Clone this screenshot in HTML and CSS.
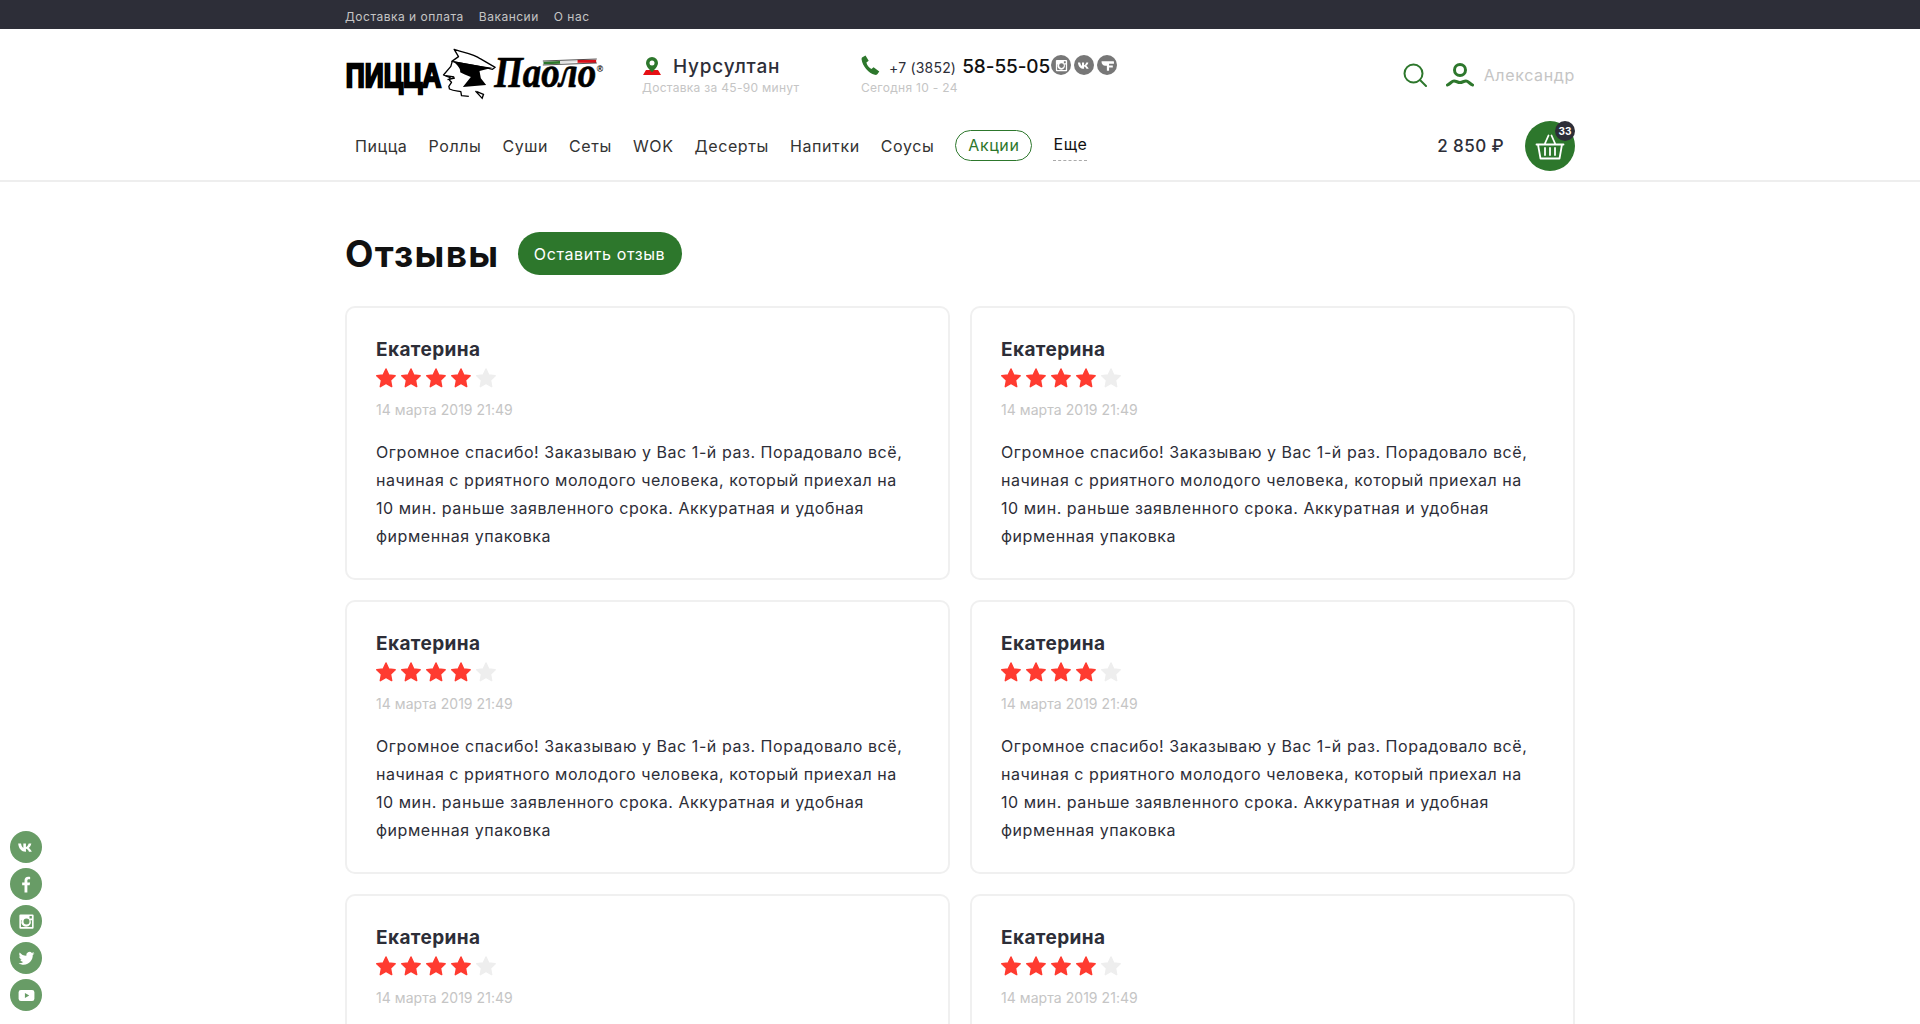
FILE: index.html
```html
<!DOCTYPE html>
<html lang="ru">
<head>
<meta charset="utf-8">
<title>Отзывы</title>
<link rel="stylesheet" href="styles.css">
</head>
<body>
<svg class="defs" width="0" height="0" aria-hidden="true">
  <symbol id="star" viewBox="0 0 24 24"><path d="M12 2.2l3 6.5 7 .9-5.1 4.8 1.3 7-6.200-3.500-6.200 3.500 1.300-7L1.900 9.600l7-.9z" fill="currentColor" stroke="currentColor" stroke-width="1.600" stroke-linejoin="round"/></symbol>
  <symbol id="vk" viewBox="0 0 24 24"><path d="M1.500 7h3.600c.5 3 1.700 5 2.900 5.500V7h3.300v4.500c1.300-.3 2.700-2 3.500-4.500h3.300c-.5 2.700-2 4.500-3.300 5.500 1.400.8 3 2.400 3.900 4.800h-3.600c-.7-2-2.100-3.300-3.800-3.600v3.600h-.7C6.100 17.300 2 13.700 1.500 7z" fill="currentColor"/></symbol>
  <symbol id="fb" viewBox="0 0 24 24"><path d="M9.500 22v-9H6.500V9.500h3V7c0-3 1.700-4.800 4.600-4.800 1.300 0 2.200.1 2.500.2v3.100h-1.800c-1.400 0-1.700.7-1.700 1.700v2.300h3.400l-.5 3.500h-2.900v9z" fill="currentColor"/></symbol>
  <symbol id="ig" viewBox="0 0 24 24"><path fill-rule="evenodd" d="M4.500 3h15A1.500 1.500 0 0 1 21 4.500v15a1.500 1.500 0 0 1-1.500 1.500h-15A1.500 1.500 0 0 1 3 19.500v-15A1.500 1.500 0 0 1 4.500 3zM15.800 5.200v3h3v-3zM5 10.500v8a.6.6 0 0 0 .6.6h12.800a.6.6 0 0 0 .6-.6v-8h-1.900a6 6 0 1 1-11.200 0zM12 8.300a3.800 3.800 0 1 0 0 7.600 3.800 3.800 0 0 0 0-7.600z" fill="currentColor"/></symbol>
  <symbol id="tw" viewBox="0 0 24 24"><path d="M22 5.500c-.7.300-1.500.6-2.400.7.900-.5 1.500-1.300 1.800-2.300-.8.500-1.700.8-2.600 1a4.100 4.100 0 0 0-7 3.700C8.400 8.400 5.400 6.800 3.400 4.300c-1.100 1.900-.5 4.300 1.300 5.500-.7 0-1.300-.2-1.900-.5 0 2 1.400 3.700 3.300 4.100-.6.200-1.200.2-1.900.1.500 1.600 2 2.800 3.800 2.800A8.300 8.300 0 0 1 2 18c1.900 1.200 4 1.900 6.300 1.900 7.600 0 11.900-6.400 11.600-12.200.9-.6 1.600-1.300 2.100-2.200z" fill="currentColor"/></symbol>
  <symbol id="yt" viewBox="0 0 24 24"><path fill-rule="evenodd" d="M5 5h14a3 3 0 0 1 3 3v8a3 3 0 0 1-3 3H5a3 3 0 0 1-3-3V8a3 3 0 0 1 3-3zm5 3.800v6.400l5.500-3.200z" fill="currentColor"/></symbol>
  <symbol id="tf" viewBox="0 0 24 24"><path d="M2.500 5h19c.5 0 .8.300.8.800V9H14.500v3h6v3h-6v5.500H11v-8H8.500a6 6 0 0 1-6-6.500z" fill="currentColor"/></symbol>
</svg>

<div class="topbar">
  <div class="container topbar-in">
    <a>Доставка и оплата</a><a>Вакансии</a><a>О нас</a>
  </div>
</div>

<header class="header">
  <div class="container header-top">
    <svg class="logo" viewBox="45 145 782 159" width="261" height="53" role="img" aria-label="Пицца Паоло">
      <text x="47" y="263" class="logo-a" textLength="286" lengthAdjust="spacingAndGlyphs">ПИЦЦА</text>
      <path d="M372 149c22 8 60 14 78 28l45 26-8 6c-36-8-84-16-122-24l20-14z" fill="#fff" stroke="#000" stroke-width="4" stroke-linejoin="round"/>
      <path d="M366 186l-4 14-22 26 20 8-2 8 6 6-8 12 2 8c12 6 26 6 34 8l2 12 22 2" fill="#fff" stroke="#000" stroke-width="4" stroke-linejoin="round"/>
      <path d="M368 184l78 14 40 6-38 10 4 22 16 20-70 6 24-30-20-8-12-6c2-10-6-20-22-34z" fill="#000"/>
      <path d="M346 228l26 4M352 240l22-5M436 274l20 22 4-12-20-8" fill="none" stroke="#000" stroke-width="4"/>
      <text x="492" y="263" class="logo-b" textLength="306" lengthAdjust="spacingAndGlyphs">Паоло</text>
      <path d="M640 190l50-2" stroke="#2d772c" stroke-width="8"/>
      <path d="M690 188l50-3" stroke="#e2e2e2" stroke-width="6"/>
      <path d="M742 185h56" stroke="#d8111b" stroke-width="9"/>
      <path d="M638 184l162-6M638 196l162-6" stroke="#000" stroke-width="2"/>
      <text x="800" y="216" class="logo-r">®</text>
    </svg>

    <div class="city">
      <div class="city-main">
        <svg class="pin" viewBox="0 0 18 18" width="18" height="18"><path d="M0 18l3-5h12l3 5z" fill="#e60f14"/><path d="M9 0a6 6 0 0 0-6 6c0 3.500 4 7 6 9.500 2-2.500 6-6 6-9.500a6 6 0 0 0-6-6z" fill="#2d772c"/><circle cx="9" cy="6" r="2.500" fill="#fff"/></svg>
        <span class="city-name">Нурсултан</span>
      </div>
      <div class="hint">Доставка за 45-90 минут</div>
    </div>

    <div class="phone">
      <div class="phone-main">
        <svg class="phone-ic" viewBox="0 0 20 20" width="20" height="20"><path d="M1 2.500L4.500.5l3.200 5.300-2.300 1.700c.6 2.600 2.400 5 5 6.500l2.200-1.700 5.700 4.200-2 2.700c-.7.700-1.600.9-2.500.6C7.500 18.500 1.500 11 .6 4.500c-.1-.8 0-1.500.4-2z" fill="#2d772c"/></svg>
        <span class="code">+7 (3852)</span>
        <span class="num">58-55-05</span>
        <span class="soc"><svg><use href="#ig"/></svg></span>
        <span class="soc"><svg><use href="#vk"/></svg></span>
        <span class="soc"><svg><use href="#tf"/></svg></span>
      </div>
      <div class="hint">Сегодня 10 - 24</div>
    </div>

    <div class="user-box">
      <svg class="search" viewBox="0 0 24 24" width="24" height="24"><circle cx="10.500" cy="10.500" r="9" fill="none" stroke="#2d772c" stroke-width="2"/><path d="M17 17l6 6" stroke="#2d772c" stroke-width="2" stroke-linecap="round"/></svg>
      <svg class="user" viewBox="0 0 28 24" width="28" height="24"><circle cx="14" cy="7" r="5.500" fill="none" stroke="#2d772c" stroke-width="3"/><path d="M1.500 22c3-1.500 4.500-4 6.500-4 2.500 0 3.500 1.500 6 1.500s3.500-1.500 6-1.500c2 0 3.500 2.500 6.500 4" fill="none" stroke="#2d772c" stroke-width="3" stroke-linecap="round"/></svg>
      <span class="user-name">Александр</span>
    </div>
  </div>

  <div class="container header-nav">
    <nav class="nav">
      <a>Пицца</a><a>Роллы</a><a>Суши</a><a>Сеты</a><a>WOK</a><a>Десерты</a><a>Напитки</a><a>Соусы</a>
      <a class="promo">Акции</a>
      <a class="more">Еще</a>
    </nav>
    <div class="price">2 850 ₽</div>
    <div class="cart">
      <svg viewBox="0 0 30 28" width="30" height="28"><path d="M1.500 11.500h27M3 11.500l2.500 14h19l2.500-14M9.500 11.500l4-9M20.500 11.500l-4-9M10 15v7M15 15v7M20 15v7" fill="none" stroke="#fff" stroke-width="1.800" stroke-linecap="round" stroke-linejoin="round"/></svg>
      <span class="badge">33</span>
    </div>
  </div>
</header>

<main class="container">
  <div class="title-row">
    <h1 class="title">Отзывы</h1>
    <a class="btn">Оставить отзыв</a>
  </div>
  <div class="grid">
    <article class="card">
      <div class="name">Екатерина</div>
      <div class="stars"><svg class="on"><use href="#star"/></svg><svg class="on"><use href="#star"/></svg><svg class="on"><use href="#star"/></svg><svg class="on"><use href="#star"/></svg><svg class="off"><use href="#star"/></svg></div>
      <div class="date">14 марта 2019 21:49</div>
      <p class="text">Огромное спасибо! Заказываю у Вас 1-й раз. Порадовало всё,<br>начиная с рриятного молодого человека, который приехал на<br>10 мин. раньше заявленного срока. Аккуратная и удобная<br>фирменная упаковка</p>
    </article>
    <article class="card">
      <div class="name">Екатерина</div>
      <div class="stars"><svg class="on"><use href="#star"/></svg><svg class="on"><use href="#star"/></svg><svg class="on"><use href="#star"/></svg><svg class="on"><use href="#star"/></svg><svg class="off"><use href="#star"/></svg></div>
      <div class="date">14 марта 2019 21:49</div>
      <p class="text">Огромное спасибо! Заказываю у Вас 1-й раз. Порадовало всё,<br>начиная с рриятного молодого человека, который приехал на<br>10 мин. раньше заявленного срока. Аккуратная и удобная<br>фирменная упаковка</p>
    </article>
    <article class="card">
      <div class="name">Екатерина</div>
      <div class="stars"><svg class="on"><use href="#star"/></svg><svg class="on"><use href="#star"/></svg><svg class="on"><use href="#star"/></svg><svg class="on"><use href="#star"/></svg><svg class="off"><use href="#star"/></svg></div>
      <div class="date">14 марта 2019 21:49</div>
      <p class="text">Огромное спасибо! Заказываю у Вас 1-й раз. Порадовало всё,<br>начиная с рриятного молодого человека, который приехал на<br>10 мин. раньше заявленного срока. Аккуратная и удобная<br>фирменная упаковка</p>
    </article>
    <article class="card">
      <div class="name">Екатерина</div>
      <div class="stars"><svg class="on"><use href="#star"/></svg><svg class="on"><use href="#star"/></svg><svg class="on"><use href="#star"/></svg><svg class="on"><use href="#star"/></svg><svg class="off"><use href="#star"/></svg></div>
      <div class="date">14 марта 2019 21:49</div>
      <p class="text">Огромное спасибо! Заказываю у Вас 1-й раз. Порадовало всё,<br>начиная с рриятного молодого человека, который приехал на<br>10 мин. раньше заявленного срока. Аккуратная и удобная<br>фирменная упаковка</p>
    </article>
    <article class="card">
      <div class="name">Екатерина</div>
      <div class="stars"><svg class="on"><use href="#star"/></svg><svg class="on"><use href="#star"/></svg><svg class="on"><use href="#star"/></svg><svg class="on"><use href="#star"/></svg><svg class="off"><use href="#star"/></svg></div>
      <div class="date">14 марта 2019 21:49</div>
      <p class="text">Огромное спасибо! Заказываю у Вас 1-й раз. Порадовало всё,<br>начиная с рриятного молодого человека, который приехал на<br>10 мин. раньше заявленного срока. Аккуратная и удобная<br>фирменная упаковка</p>
    </article>
    <article class="card">
      <div class="name">Екатерина</div>
      <div class="stars"><svg class="on"><use href="#star"/></svg><svg class="on"><use href="#star"/></svg><svg class="on"><use href="#star"/></svg><svg class="on"><use href="#star"/></svg><svg class="off"><use href="#star"/></svg></div>
      <div class="date">14 марта 2019 21:49</div>
      <p class="text">Огромное спасибо! Заказываю у Вас 1-й раз. Порадовало всё,<br>начиная с рриятного молодого человека, который приехал на<br>10 мин. раньше заявленного срока. Аккуратная и удобная<br>фирменная упаковка</p>
    </article>
  </div>
</main>

<aside class="float-soc">
  <a><svg><use href="#vk"/></svg></a>
  <a><svg><use href="#fb"/></svg></a>
  <a><svg><use href="#ig"/></svg></a>
  <a><svg><use href="#tw"/></svg></a>
  <a><svg><use href="#yt"/></svg></a>
</aside>
</body>
</html>
```

FILE: styles.css
```css
* { box-sizing: border-box; }
html, body { margin: 0; padding: 0; height: 100%; overflow: hidden; }
body { font-family: Inter, "Noto Sans", sans-serif; color: #2d2e38; background: #fff; font-size: 16px; letter-spacing: .45px; }
.defs { position: absolute; }
.container { width: 1230px; margin: 0 auto; }

.topbar { background: #2d2e38; height: 29px; }
.topbar-in { display: flex; gap: 15px; align-items: center; height: 29px; padding-top: 4px; font-size: 12px; color: #c5c5c5; letter-spacing: .5px; }

.header { border-bottom: 2px solid #eeeeee; height: 153px; }
.header-top { display: flex; align-items: flex-start; height: 86px; }
.logo { margin-top: 19px; flex: none; overflow: visible; }
.logo-a { font: 900 100px "Liberation Sans", sans-serif; stroke: #000; stroke-width: 7px; letter-spacing: 0; }
.logo-b { font: italic 700 132px "Liberation Serif", serif; stroke: #000; stroke-width: 2px; letter-spacing: 0; }
.logo-r { font: 700 26px "Liberation Sans", sans-serif; letter-spacing: 0; }

.city { margin-left: 36px; margin-top: 26px; width: 219px; }
.city-main { display: flex; align-items: center; gap: 12px; height: 22px; padding-left: 1px; }
.city-name { font-size: 19px; font-weight: 500; letter-spacing: .8px; }
.hint { font-size: 12px; color: #c5c5c5; margin-top: 3px; letter-spacing: .3px; line-height: 15px; }

.phone-main { display: flex; align-items: center; height: 22px; }
.phone { margin-top: 26px; }
.phone-ic { margin-right: 8px; margin-top: -2px; }
.code { font-size: 14px; letter-spacing: .2px; margin-right: 6px; margin-top: 3px; }
.num { font-size: 19px; font-weight: 500; color: #111; letter-spacing: -.1px; margin-right: -2px; }
.soc { width: 20px; height: 20px; border-radius: 50%; background: #777; color: #fff; margin-left: 3px; margin-top: -2px; display: flex; align-items: center; justify-content: center; flex: none; }
.soc svg { width: 15px; height: 15px; }

.user-box { margin-left: auto; display: flex; align-items: center; margin-top: 34px; height: 24px; }
.search { margin-right: 19px; }
.user { margin-right: 10px; }
.user-name { color: #c5c5c5; font-size: 16px; letter-spacing: .65px; }

.header-nav { display: flex; align-items: center; height: 61px; }
.nav { display: flex; align-items: center; padding-left: 10px; gap: 21px; font-size: 16px; color: #333; letter-spacing: .6px; }
.promo { border: 1px solid #2d772c; border-radius: 16px; color: #2d772c; height: 31px; line-height: 29px; padding: 0 12px; }
.more { color: #111; border-bottom: 1px dashed #aaa; padding-bottom: 6px; margin-top: 4px; }
.price { margin-left: auto; font-size: 17px; font-weight: 500; margin-right: 21px; letter-spacing: .4px; }
.cart { position: relative; width: 50px; height: 50px; border-radius: 50%; background: #2d772c; display: flex; align-items: center; justify-content: center; }
.cart svg { margin-top: 3px; }
.badge { position: absolute; top: 0; right: 0; width: 20px; height: 20px; border-radius: 50%; background: #2d2e38; color: #fff; font-size: 10px; font-weight: 700; line-height: 20px; text-align: center; letter-spacing: 0; }

.title-row { display: flex; align-items: center; gap: 18px; margin-top: 49px; height: 45px; }
.title { margin: 0; font-size: 37px; font-weight: 700; color: #111; letter-spacing: 1.3px; line-height: 45px; }
.btn { display: flex; align-items: center; justify-content: center; width: 164px; height: 43px; border-radius: 22px; background: #2d772c; color: #fff; font-size: 16px; letter-spacing: .6px; }

.grid { display: grid; grid-template-columns: 605px 605px; gap: 20px; margin-top: 30px; }
.card { border: 2px solid #f0f0f0; border-radius: 10px; padding: 31px 29px 28px; height: 274px; }
.name { font-size: 19px; font-weight: 700; line-height: 22px; letter-spacing: .4px; }
.stars { display: flex; gap: 3px; margin-top: 5px; height: 24px; margin-left: -1px; }
.stars svg { width: 22px; height: 24px; }
.on { color: #ff3b30; }
.off { color: #eeeeee; }
.date { font-size: 14px; color: #c5c5c5; margin-top: 12px; line-height: 16px; letter-spacing: .05px; }
.text { margin: 20px 0 0; font-size: 16px; line-height: 28px; letter-spacing: .55px; }

.float-soc { position: fixed; left: 10px; top: 831px; display: flex; flex-direction: column; gap: 5px; }
.float-soc a { width: 32px; height: 32px; border-radius: 50%; background: #689c66; color: #fff; display: flex; align-items: center; justify-content: center; }
.float-soc svg { width: 19px; height: 19px; }
```
